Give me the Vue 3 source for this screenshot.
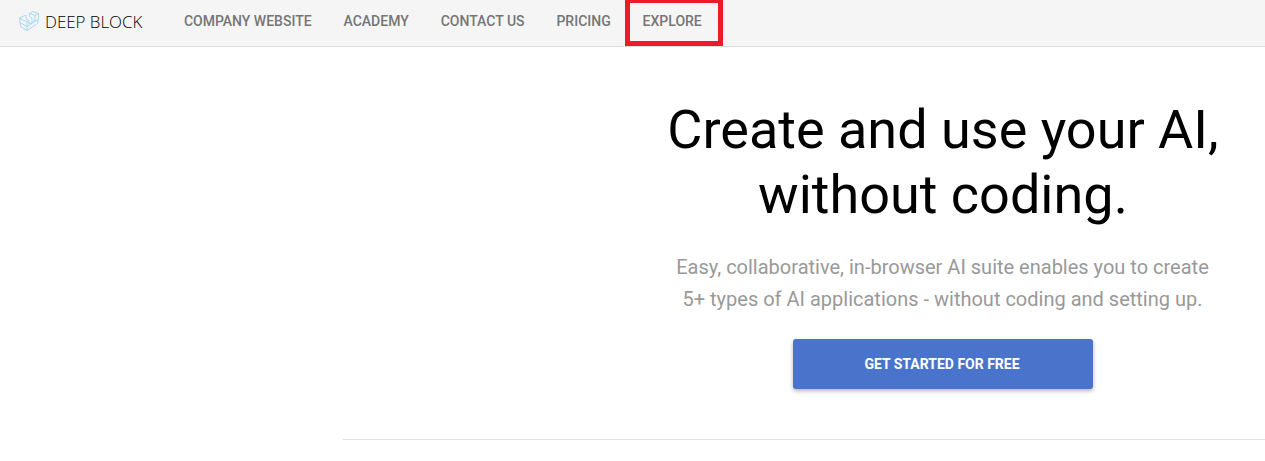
<template>
  <div class="page">
    <header class="topbar">
      <a class="brand">
        <svg class="brand-icon" width="22" height="22" viewBox="0 0 22 22" fill="none" stroke="#a9d8f2" stroke-width="1" stroke-linejoin="round">
          <path d="M1.5 8 L8 5 L8 9 L11 10.5 L11 14 L14 12.5 L14 8 L11.5 6.5 L11.5 3.5 L15 1.5 L20.5 3.5 L20.5 8 L19.5 13.5 L9 20.5 L2.5 16.5 Z" />
          <path d="M1.5 8 L9 12 L9 20.5 M9 12 L11 10.5 M11.5 3.5 L17 5.5 L20.5 3.5 M17 5.5 L17 10 L14 12.5 M2 12.5 L9 16.5 L20 9.5" />
        </svg>
        <span class="brand-name">DEEP BLOCK</span>
      </a>
      <nav class="nav">
        <a v-for="item in navItems" :key="item" class="nav-link" :class="{ marked: item === 'Explore' }">{{ item }}</a>
      </nav>
    </header>

    <main class="hero">
      <div class="hero-side"></div>
      <section class="hero-copy">
        <h1>Create and use your AI,<br />without coding.</h1>
        <p>Easy, collaborative, in-browser AI suite enables you to create<br />5+ types of AI applications - without coding and setting up.</p>
        <button class="cta">Get started for free</button>
      </section>
    </main>
    <div class="divider"></div>
  </div>
</template>

<script setup>
const navItems = ['Company website', 'Academy', 'Contact us', 'Pricing', 'Explore']
</script>

<style>
html, body {
  background: #fff;
}
</style>

<style scoped>
.page {
  height: 461px;
  overflow: hidden;
  font-family: Roboto, "Liberation Sans", sans-serif;
}

.topbar {
  display: flex;
  align-items: center;
  height: 46px;
  padding-left: 18px;
  background: #f5f5f5;
  border-bottom: 1px solid #dcdcdc;
}

.brand {
  display: flex;
  align-items: center;
  gap: 5px;
  width: 150px;
  padding-bottom: 4px;
}

.brand-name {
  font-family: "Open Sans", Roboto, sans-serif;
  font-size: 16.9px;
  font-weight: 300;
  color: #000;
  white-space: nowrap;
}

.nav {
  display: flex;
  align-items: center;
  height: 100%;
}

.nav-link {
  position: relative;
  display: flex;
  align-items: center;
  box-sizing: border-box;
  height: 100%;
  padding: 0 16px 4px 15.9px;
  font-size: 14px;
  font-weight: 500;
  text-transform: uppercase;
  color: #757575;
  white-space: nowrap;
}

.nav-link.marked::after {
  content: "";
  position: absolute;
  left: -1.4px;
  right: -5px;
  top: -2px;
  bottom: 0;
  border: 5px solid #ed1c24;
}

.hero {
  display: grid;
  grid-template-columns: 621px 644px;
  height: 392px;
}

.hero-copy {
  display: flex;
  flex-direction: column;
  align-items: center;
  text-align: center;
  padding-top: 50px;
}

h1 {
  margin: 0;
  font-size: 54px;
  font-weight: 400;
  line-height: 65px;
  color: #000;
}

p {
  margin: 24px 1px 0 0;
  font-size: 20px;
  line-height: 32px;
  color: #999;
}

.cta {
  width: 300px;
  height: 50px;
  margin-top: 24px;
  padding: 0 2px 0 0;
  border: none;
  border-radius: 3px;
  background: #4a74cb;
  color: #fff;
  font-family: inherit;
  font-size: 14px;
  font-weight: 700;
  text-transform: uppercase;
  box-shadow: 0 2px 4px rgba(0, 0, 0, 0.3);
}

.divider {
  margin-left: 343px;
  border-top: 1px solid #e0e0e0;
}
</style>
